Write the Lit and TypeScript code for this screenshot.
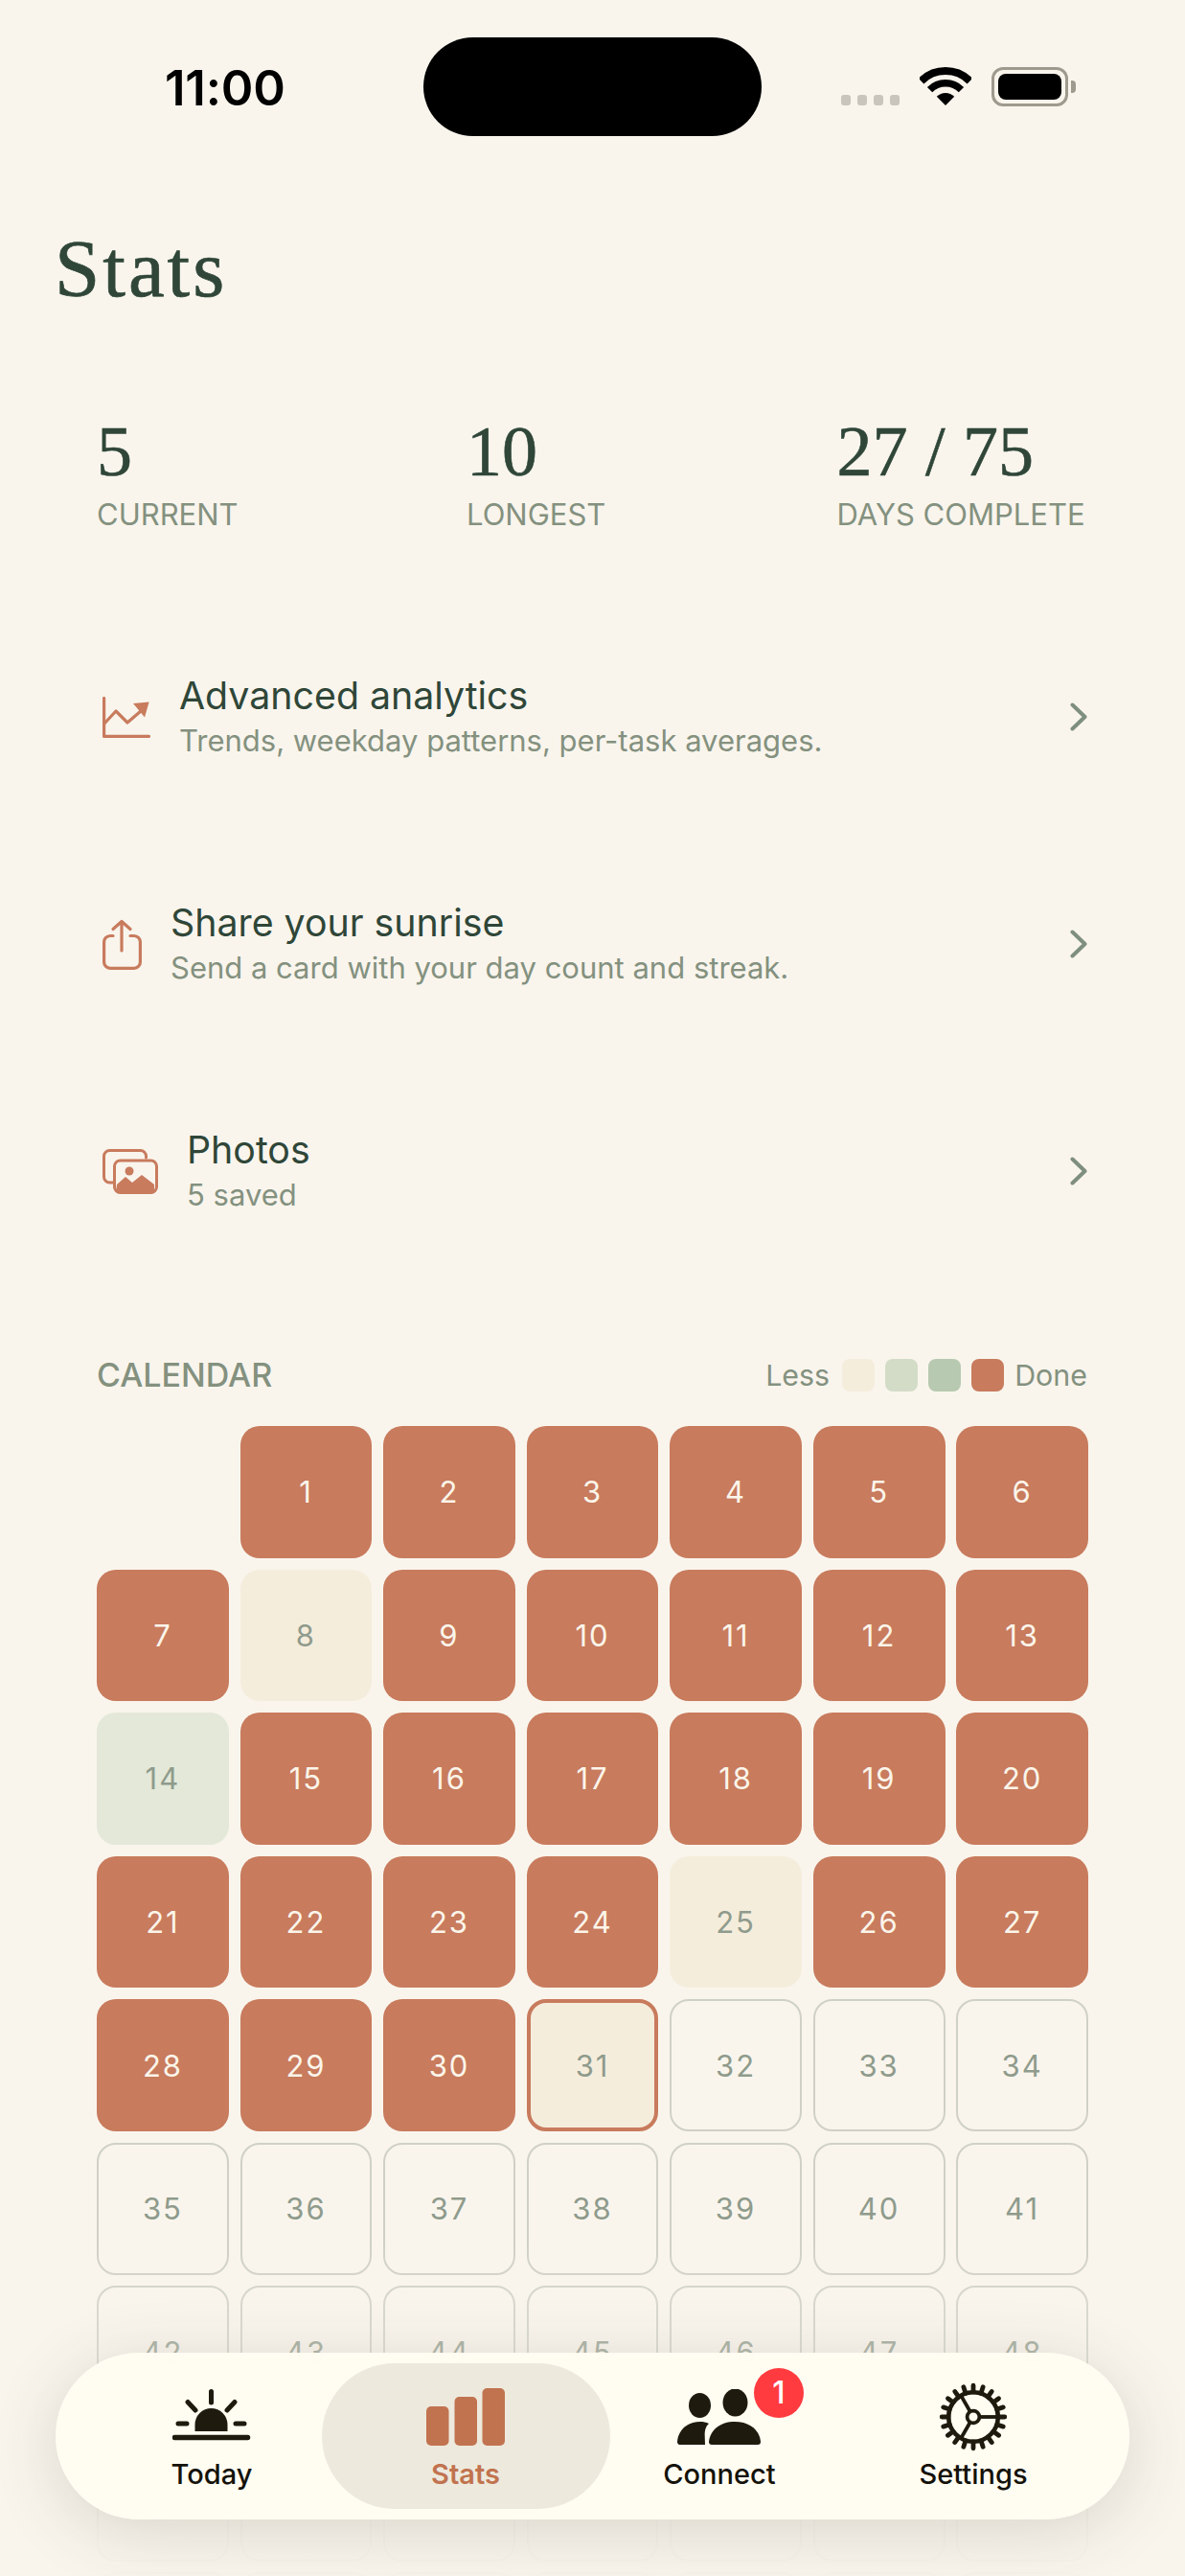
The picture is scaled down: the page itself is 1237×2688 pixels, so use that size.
import { LitElement, html, css, svg } from "lit";
import { customElement } from "lit/decorators.js";

const chart = html`<svg width="50" height="43" viewBox="0 0 50 43"><path d="M1.6 1.5V41.4H48.5" fill="none" stroke="#C87B5D" stroke-width="3.2" stroke-linecap="round" stroke-linejoin="round"/><path d="M1.5 28.5L14 15L26 27L40 15" fill="none" stroke="#C87B5D" stroke-width="3.2" stroke-linejoin="round"/><path d="M32 7L48.6 5.5L44 21.5Z" fill="#C87B5D"/></svg>`;
const share = html`<svg width="41" height="53" viewBox="0 0 41 53"><g fill="none" stroke="#C87B5D" stroke-width="3.2" stroke-linecap="round" stroke-linejoin="round"><path d="M11 17.5H8A6.5 6.5 0 0 0 1.6 24V44.9A6.5 6.5 0 0 0 8 51.4H33A6.5 6.5 0 0 0 39.4 44.9V24A6.5 6.5 0 0 0 33 17.5H29"/><path d="M20 33V3M11 10.5L20 2.5L29 10.5"/></g></svg>`;
const photos = html`<svg width="58" height="47" viewBox="0 0 58 47"><g fill="none" stroke="#C87B5D" stroke-width="3" stroke-linecap="round"><path d="M45.5 9V7.5A6 6 0 0 0 39.5 1.5H7.5A6 6 0 0 0 1.5 7.5V29A6 6 0 0 0 7.5 35H11"/><rect x="12.5" y="12" width="44" height="33.5" rx="6"/></g><circle cx="28" cy="23" r="4.5" fill="#C87B5D"/><path d="M15 37L24 29L31 35L41 27L54 37V45H14Z" fill="#C87B5D"/></svg>`;
const chevron = html`<svg width="18" height="30" viewBox="0 0 18 30"><path d="M2.5 2.5L15.5 15L2.5 27.5" fill="none" stroke="#7F8F7F" stroke-width="4" stroke-linecap="round" stroke-linejoin="round"/></svg>`;

const sun = html`<svg width="82" height="54" viewBox="0 0 82 54"><path d="M23.5 44V37a17 17 0 0 1 34 0V44Z" fill="#1E1A0D"/><g stroke="#1E1A0D" stroke-width="5" stroke-linecap="round" fill="none"><path d="M2.5 50.5H78.5" stroke-width="5.5"/><path d="M40.5 2.5V14M16 13.5L24 22M65 13.5L57 22M6 36H15M66 36H75"/></g></svg>`;
const bars = html`<svg width="82" height="60" viewBox="0 0 82 60"><g fill="#C1734F"><rect x="0" y="19" width="23.5" height="41" rx="5"/><rect x="29.5" y="9" width="23.5" height="51" rx="5"/><rect x="58.5" y="0" width="23.5" height="60" rx="5"/></g></svg>`;
const people = html`<svg width="88" height="58" viewBox="0 0 88 58"><g fill="#1E1A0D"><ellipse cx="23.5" cy="17" rx="11.5" ry="13"/><ellipse cx="60.5" cy="14" rx="13" ry="14.5"/><path d="M2 58A3 3 0 0 1 0 55C1 42 11 34 24 34C27 34 30 34.5 33 36C27 41 29 50 29 58Z"/><path d="M36 58A3 3 0 0 1 33 55C34 43 45 34 60 34C76 34 86 43 87 55A3 3 0 0 1 84 58Z"/></g></svg>`;

const teeth = Array.from({ length: 20 }, (_, i) => {
  const a = (i * 2 * Math.PI) / 20;
  const c = Math.cos(a), s = Math.sin(a);
  return svg`<line x1=${36 + 26 * c} y1=${36 + 26 * s} x2=${36 + 32.8 * c} y2=${36 + 32.8 * s}/>`;
});
const spokes = [0, 120, 240].map((d) => {
  const a = (d * Math.PI) / 180;
  const c = Math.cos(a), s = Math.sin(a);
  return svg`<line x1=${36 + 7 * c} y1=${36 + 7 * s} x2=${36 + 25 * c} y2=${36 + 25 * s} stroke-width="3.8"/>`;
});
const gear = html`<svg width="72" height="72" viewBox="0 0 72 72"><g fill="none" stroke="#1E1A0D"><circle cx="36" cy="36" r="25.8" stroke-width="4.6"/><circle cx="36" cy="36" r="6.4" stroke-width="3.8"/><g stroke-width="4.8" stroke-linecap="round">${teeth}</g>${spokes}</g></svg>`;

const rows = [
  { icon: chart, t: "Advanced analytics", s: "Trends, weekday patterns, per-task averages." },
  { icon: share, t: "Share your sunrise", s: "Send a card with your day count and streak." },
  { icon: photos, t: "Photos", s: "5 saved" },
];
const partial: Record<number, string> = { 8: "cream", 14: "sage", 25: "cream", 31: "today" };

@customElement("app-root")
export class AppRoot extends LitElement {
  static styles = css`
    :host { display: block; position: relative; width: 1237px; height: 2688px; overflow: hidden; background: #F9F5ED; font-family: Inter, "Liberation Sans", sans-serif; }
    .status { display: flex; align-items: flex-start; height: 142px; padding-top: 39px; box-sizing: border-box; }
    .time { width: 442px; box-sizing: border-box; padding: 22px 0 0 172px; font: 600 51px/62px Inter, sans-serif; color: #000; letter-spacing: -0.2px; }
    .island { width: 353px; height: 103px; border-radius: 52px; background: #000; }
    .sys { display: flex; align-items: flex-start; margin-left: 83px; padding-top: 31px; }
    .dots { display: flex; gap: 7px; margin-top: 29px; }
    .dots i { width: 10px; height: 11px; border-radius: 3px; background: #C9C5BD; }
    .wifi { margin-left: 21px; }
    .batt { margin-left: 21px; display: flex; align-items: center; gap: 3px; }
    .shell { width: 80px; height: 41px; box-sizing: border-box; border: 3px solid #9F9A8E; border-radius: 12px; padding: 4px; }
    .shell b { display: block; height: 100%; border-radius: 8px; background: #000; }
    .nub { width: 5px; height: 13px; background: #9F9A8E; border-radius: 0 4px 4px 0; }

    h1 { margin: 88px 0 0 57px; font: 400 85px/100px "Liberation Serif", serif; color: #2F4638; letter-spacing: 3px; -webkit-text-stroke: 0.7px #2F4638; }
    .stats { display: grid; grid-template-columns: 386px 386.5px auto; margin: 99px 0 0 101px; }
    .num { font: 400 74px/84px "Liberation Serif", serif; color: #2F4638; -webkit-text-stroke: 0.6px #2F4638; }
    .lab { font: 400 31px/38px Inter, sans-serif; color: #84917F; margin-top: 5px; }

    .links { margin: 142px 0 0 107px; width: 1028px; display: flex; flex-direction: column; gap: 137px; }
    .link { display: flex; align-items: center; gap: 30px; height: 100px; }
    .txt { flex: 1; }
    .tt { font: 400 39.3px/50px Inter, sans-serif; color: #2F4638; }
    .ts { font: 400 31px/44px Inter, sans-serif; color: #84917F; }

    .cal { margin: 141px 101px 0; }
    .cal-head { display: flex; align-items: center; justify-content: space-between; height: 44px; color: #84917F; font: 400 30.4px/44px Inter, sans-serif; }
    .cal-head .h { font-weight: 500; font-size: 34px; }
    .legend { display: flex; align-items: center; gap: 11px; }
    .legend i { width: 34px; height: 34px; border-radius: 8px; }
    .legend span:first-child { margin-right: 2px; }
    .legend span:last-child { margin-right: 1px; }
    .grid { display: grid; grid-template-columns: repeat(7, 1fr); gap: 11.7px; margin-top: 31px; }
    .c { aspect-ratio: 1; box-sizing: border-box; border-radius: 20px; display: flex; align-items: center; justify-content: center; font: 400 31px/1 Inter, sans-serif; letter-spacing: 2px; color: #8F9B8C; }
    .c.done { background: #C87B5D; color: #FBF5EA; }
    .c.cream { background: #F5EDDC; }
    .c.sage { background: #E3E8D8; }
    .c.today { background: #F5EDDC; border: 4px solid #C87B5D; }
    .c.future { border: 2px solid #D0D1C6; }
    .c.blank { visibility: hidden; }

    .fade { position: absolute; left: 0; right: 0; bottom: 0; height: 350px; background: linear-gradient(to bottom, rgba(249,245,237,0), rgba(249,245,237,.55) 55%, rgba(249,245,237,.9) 85%, rgba(249,245,237,.95)); }
    .bar { position: absolute; left: 58px; top: 2455px; width: 1121px; height: 174px; border-radius: 87px; background: rgba(255,252,242,.985); box-shadow: 0 12px 70px rgba(60,50,30,.16); display: grid; grid-template-columns: repeat(4, 265px); justify-content: center; }
    .tab { position: relative; font: 500 29px/34px Inter, sans-serif; color: #14120A; }
    .tab.on { color: #C1734F; font-weight: 600; }
    .tab.on::before { content: ""; position: absolute; left: -18px; right: -18px; top: 11px; bottom: 11px; border-radius: 76px; background: #EDE9DD; }
    .ico { position: absolute; left: 0; right: 0; display: flex; justify-content: center; }
    .cap { position: absolute; left: 0; right: 0; top: 110px; text-align: center; }
    .badge { position: absolute; left: 729px; top: 16px; width: 52px; height: 52px; border-radius: 50%; background: #FF3B40; color: #fff; font: 500 32px/52px Inter, sans-serif; text-align: center; }
  `;

  render() {
    const cells = [html`<div class="c blank"></div>`];
    for (let d = 1; d <= 75; d++) {
      const cls = partial[d] ?? (d < 31 ? "done" : "future");
      cells.push(html`<div class="c ${cls}">${d}</div>`);
    }
    return html`
      <div class="status">
        <div class="time">11:00</div>
        <div class="island"></div>
        <div class="sys">
          <div class="dots"><i></i><i></i><i></i><i></i></div>
          <svg class="wifi" width="54" height="40" viewBox="0 0 54 40"><g fill="none" stroke="#000"><path d="M1.55 14.55A36 36 0 0 1 52.45 14.55" stroke-width="8"/><path d="M10.56 23.56A23.25 23.25 0 0 1 43.44 23.56" stroke-width="7.5"/></g><path d="M27 40L17.8 30.8A13 13 0 0 1 36.2 30.8Z"/></svg>
          <div class="batt"><div class="shell"><b></b></div><div class="nub"></div></div>
        </div>
      </div>
      <h1>Stats</h1>
      <div class="stats">
        <div><div class="num">5</div><div class="lab">CURRENT</div></div>
        <div><div class="num">10</div><div class="lab">LONGEST</div></div>
        <div><div class="num">27 / 75</div><div class="lab">DAYS COMPLETE</div></div>
      </div>
      <div class="links">
        ${rows.map((r) => html`<div class="link">${r.icon}<div class="txt"><div class="tt">${r.t}</div><div class="ts">${r.s}</div></div>${chevron}</div>`)}
      </div>
      <div class="cal">
        <div class="cal-head">
          <span class="h">CALENDAR</span>
          <div class="legend"><span>Less</span><i style="background:#F5EDDC"></i><i style="background:#D2DCC6"></i><i style="background:#B7C9B0"></i><i style="background:#C87B5D"></i><span>Done</span></div>
        </div>
        <div class="grid">${cells}</div>
      </div>
      <div class="fade"></div>
      <div class="bar">
        <div class="tab"><div class="ico" style="top:38px">${sun}</div><div class="cap">Today</div></div>
        <div class="tab on"><div class="ico" style="top:37px">${bars}</div><div class="cap">Stats</div></div>
        <div class="tab"><div class="ico" style="top:38px">${people}</div><div class="cap">Connect</div></div>
        <div class="tab"><div class="ico" style="top:31px">${gear}</div><div class="cap">Settings</div></div>
        <div class="badge">1</div>
      </div>
    `;
  }
}
